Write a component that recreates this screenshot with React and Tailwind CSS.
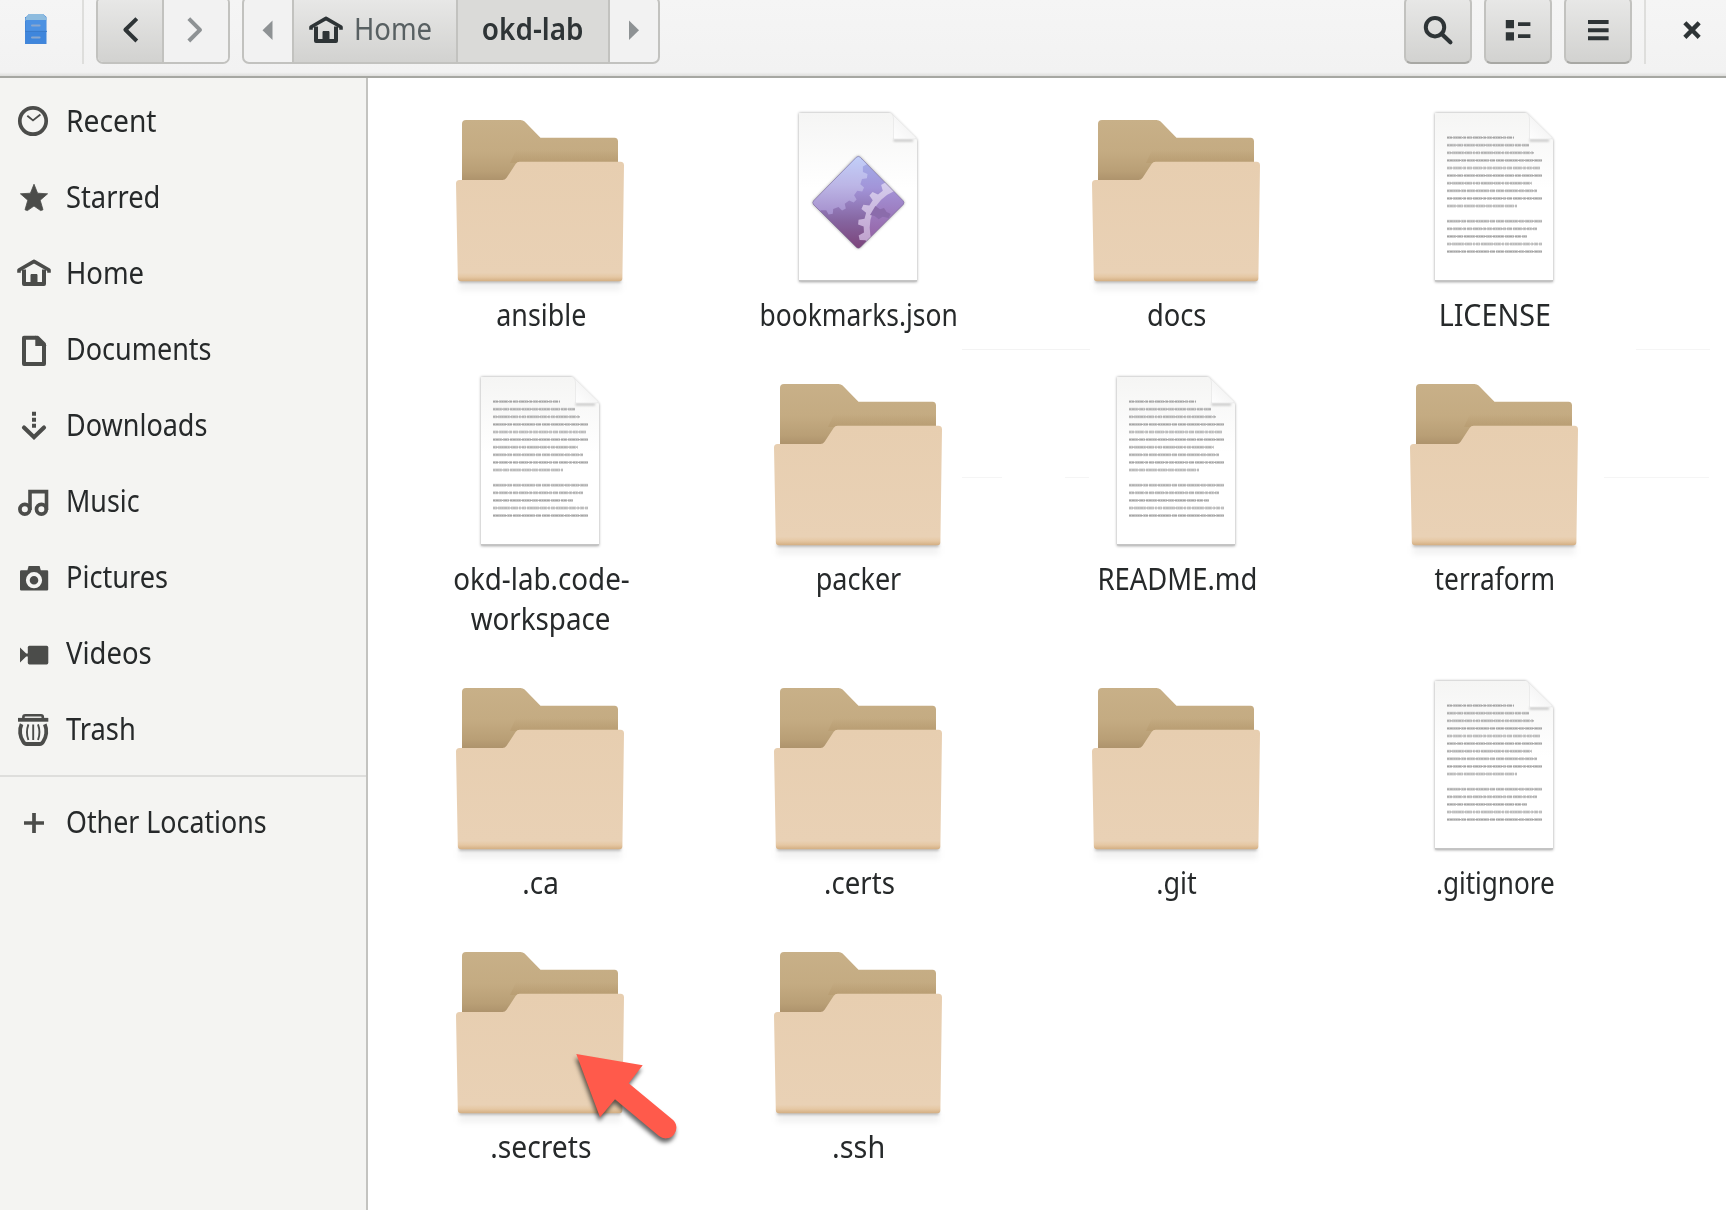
import React from "react";
import clsx from "clsx";

/* ---------- symbolic icons (32px grid) ---------- */
const Sym = ({ children, className }) => (
  <svg viewBox="0 0 32 32" className={clsx("h-8 w-8 shrink-0 overflow-visible", className)} fill="none" stroke="currentColor">
    {children}
  </svg>
);

const Recent = () => (
  <Sym>
    <circle cx="15" cy="16" r="13.2" strokeWidth="3.7" />
    <path d="M9.3 10.8 15 15.4 22.4 9.6" strokeWidth="1.9" />
  </Sym>
);
const Star = () => (
  <Sym>
    <path d="M16 3.2 19.6 12.2 29.6 12.8 22.2 19.2 25 28.8 22.6 29.6 16 25 9.4 29.6 7 28.8 9.8 19.2 2.4 12.8 12.4 12.2Z" fill="currentColor" strokeWidth="0.8" strokeLinejoin="round" />
  </Sym>
);
const HomeIcon = () => (
  <Sym>
    <path d="M1 15.8V13L16 4.4 31 13V15.8" strokeWidth="3.6" strokeLinejoin="round" />
    <path d="M6 12.5V27H26V12.5" strokeWidth="4" strokeLinejoin="round" />
    <path d="M13 27.5V17.5H19V27.5Z" fill="currentColor" strokeWidth="1" />
  </Sym>
);
const Doc = () => (
  <Sym>
    <path d="M6 4.8H19.6L26 11.2V31H6Z" strokeWidth="4" strokeLinejoin="round" />
    <path d="M18 4V12.4H27Z" fill="currentColor" strokeWidth="1.4" />
  </Sym>
);
const Down = () => (
  <Sym>
    <path d="M14 2.8h4v4h-4zM14 8.8h4v4h-4zM14 14.8h4v4h-4z" fill="currentColor" stroke="none" />
    <path d="M6 18.6 16 28.2 26 18.6" strokeWidth="4.2" strokeLinecap="round" />
  </Sym>
);
const Music = () => (
  <Sym>
    <circle cx="6.8" cy="24.2" r="4.9" strokeWidth="3.7" />
    <circle cx="23.4" cy="24.2" r="4.9" strokeWidth="3.7" />
    <path d="M12 25V6.6H28.5V25" strokeWidth="3.6" />
  </Sym>
);
const Camera = () => (
  <Sym>
    <path d="M2 10.4Q2 9.2 3.2 9.2H9.4L10.6 5H21.6L22.8 9.2H29Q30.2 9.2 30.2 10.4V28.4Q30.2 29.4 29 29.4H3.2Q2 29.4 2 28.4Z" fill="currentColor" stroke="none" />
    <circle cx="16" cy="19.2" r="6.2" stroke="#f4f4f2" strokeWidth="3.8" />
  </Sym>
);
const Video = () => (
  <Sym>
    <rect x="9.8" y="8.8" width="20.5" height="18.6" rx="1.6" fill="currentColor" stroke="none" />
    <path d="M2 10.6 8.2 16.4H10V19.6H8.2L2 25.4Z" fill="currentColor" stroke="none" />
  </Sym>
);
const Trash = () => (
  <Sym>
    <path d="M0 6.8H30.3" strokeWidth="3.8" />
    <path d="M5.4 5.6V4Q5.4 2.2 7.2 2.2H23Q24.8 2.2 24.8 4V5.6" strokeWidth="2.6" />
    <path d="M3.6 11.2C0.8 17 2 24 5.2 28.6Q6.4 31 8.6 31H21.8Q24 31 25.2 28.6C28.4 24 29.5 17 26.8 11.2" strokeWidth="3.8" />
    <path d="M10.4 11.4C8.4 17 8.4 22 10.4 27M15.2 11.4V27M20 11.4C22 17 22 22 20 27" strokeWidth="1.9" />
  </Sym>
);
const Plus = () => (
  <Sym>
    <path d="M6 17H26M16 7V27" strokeWidth="3.7" />
  </Sym>
);

/* ---------- file icons (180 x 188 box) ---------- */
const Defs = () => (
  <svg className="absolute h-0 w-0" aria-hidden="true">
    <defs>
      <linearGradient id="back" x1="0" y1="0" x2="0" y2="1">
        <stop offset="0" stopColor="#c8b088" />
        <stop offset="0.5" stopColor="#c4ab82" />
        <stop offset="0.8" stopColor="#b99f76" />
        <stop offset="1" stopColor="#a98e68" />
      </linearGradient>
      <linearGradient id="backRight" x1="0" y1="0" x2="0" y2="1">
        <stop offset="0" stopColor="#b79b70" stopOpacity="0" />
        <stop offset="1" stopColor="#b79b70" />
      </linearGradient>
      <linearGradient id="front" x1="0" y1="0" x2="0" y2="1">
        <stop offset="0" stopColor="#e7ceb0" />
        <stop offset="0.93" stopColor="#e9d1b5" />
        <stop offset="0.965" stopColor="#e5c7a3" />
        <stop offset="1" stopColor="#d3ae82" />
      </linearGradient>
      <linearGradient id="paper" x1="0" y1="0" x2="0" y2="1">
        <stop offset="0" stopColor="#f5f5f4" />
        <stop offset="0.45" stopColor="#ffffff" />
      </linearGradient>
      <linearGradient id="fold" x1="0" y1="1" x2="0.6" y2="0.4">
        <stop offset="0" stopColor="#ffffff" />
        <stop offset="1" stopColor="#f4f4f4" />
      </linearGradient>
      <linearGradient id="gem" x1="0" y1="0" x2="0" y2="1">
        <stop offset="0" stopColor="#a3b2ec" />
        <stop offset="0.35" stopColor="#a294d8" />
        <stop offset="0.7" stopColor="#85649f" />
        <stop offset="1" stopColor="#7b4278" />
      </linearGradient>
      <linearGradient id="gearA" gradientUnits="userSpaceOnUse" x1="0" y1="165" x2="0" y2="345">
        <stop offset="0" stopColor="#c2d0fa" />
        <stop offset="0.5" stopColor="#bcb6e6" />
        <stop offset="1" stopColor="#a58fcc" />
      </linearGradient>
      <linearGradient id="gearB" gradientUnits="userSpaceOnUse" x1="0" y1="250" x2="0" y2="440">
        <stop offset="0" stopColor="#d5cdee" />
        <stop offset="1" stopColor="#bf9fcb" />
      </linearGradient>
      <linearGradient id="inner" gradientUnits="userSpaceOnUse" x1="0" y1="270" x2="0" y2="420">
        <stop offset="0" stopColor="#a392d6" />
        <stop offset="1" stopColor="#9562a4" />
      </linearGradient>
      <clipPath id="gemClip">
        <path d="M349 172Q355 166 361 172L489 302Q495 308 489 314L361 442Q355 448 349 442L221 314Q215 308 221 302Z" />
      </clipPath>
    </defs>
  </svg>
);

const Folder = () => (
  <svg viewBox="0 0 180 188" className="h-full w-full overflow-visible">
    <path d="M9 177H171" stroke="#000" strokeOpacity="0.32" strokeWidth="3" className="blur-[1.5px]" />
    <path d="M9 182H171" stroke="#000" strokeOpacity="0.06" strokeWidth="8" className="blur-[3px]" />
    <path d="M12 80V20Q12 16 16 16H70.5Q73 16 74.6 17.6L90.5 33.7H164.5Q168 33.7 168 37.5V80Z" fill="url(#back)" />
    <path d="M66 46H168V59H60Z" fill="url(#backRight)" opacity="0.7" />
    <path d="M6 79.5Q6 76 9.5 76H52.5Q55 76 56.6 73.8L65.6 60Q67 57.8 69.6 57.8H170.5Q174 57.8 174 61.5L172.4 174Q172.4 177.2 169.4 177.2H11Q8 177.2 7.8 174Z" fill="url(#front)" />
  </svg>
);

const Page = ({ children }) => (
  <svg viewBox="0 0 180 188" className="h-full w-full overflow-visible">
    <path d="M31 9H122L149 36V178H31Z" fill="#000" opacity="0.38" className="blur-[1.4px]" />
    <path d="M31 9H122Q124 9 126 11L147 32Q149 34 149 36.5V177H31Z" fill="url(#paper)" />
    <path d="M31 176.8H149" stroke="#c4c4c4" strokeWidth="1.4" />
    <path d="M125.5 36.4H145" stroke="#000" strokeOpacity="0.22" strokeWidth="2.2" className="blur-[1px]" />
    <path d="M123.5 9.6Q125.5 11 125.5 15V35H146.5Q149 35 148 33.4Z" fill="url(#fold)" stroke="#e2e2e2" strokeWidth="0.6" />
    {children}
  </svg>
);

const LINE_ENDS = [110, 125, 130, 138, 136, 138, 128, 133, 138, 113, null, 138, 133, 123, 138, 138];
const LINE_DASHES = ["5 1 9 1 3 1", "9 1 6 1 11 1", "4 1 12 1 7 1 2 1", "13 1 5 1 8 1"];

const TextPage = () => (
  <Page>
    {LINE_ENDS.map((end, i) =>
      end ? (
        <g key={i}>
          <path d={`M43 ${33.6 + i * 7.6}H${end}`} stroke="#d2d2d2" strokeWidth="3" strokeDasharray={LINE_DASHES[i % 4]} />
          <path d={`M43 ${33.6 + i * 7.6}H${end}`} stroke="#9c9c9c" strokeWidth="1.2" strokeDasharray="2 0.7 3 0.8 1.4 0.6" opacity="0.85" />
        </g>
      ) : null
    )}
  </Page>
);

const gear = (cx, cy, r, teeth, depth, phase = 0) => {
  const step = (Math.PI * 2) / teeth;
  const pt = (rad, a) => `${(cx + rad * Math.cos(a)).toFixed(1)} ${(cy + rad * Math.sin(a)).toFixed(1)}`;
  let d = "";
  for (let i = 0; i < teeth; i++) {
    const a = i * step + phase;
    d += `${i ? "L" : "M"}${pt(r, a)}L${pt(r + depth, a + step * 0.12)}L${pt(r + depth, a + step * 0.42)}L${pt(r, a + step * 0.56)}`;
  }
  return d + "Z";
};

const GemPage = () => (
  <Page>
    <g transform="translate(-28 -4) scale(0.33333)">
      <path d="M349 172Q355 166 361 172L489 302Q495 308 489 314L361 442Q355 448 349 442L221 314Q215 308 221 302Z" fill="#444" opacity="0.6" className="blur-[4px]" />
      <g clipPath="url(#gemClip)">
        <rect x="215" y="165" width="280" height="285" fill="url(#gem)" />
        <path d={gear(248, 210, 121, 20, 14, 0.05)} fill="url(#gearA)" />
        <path d={gear(505, 382, 134, 20, 17, 0.02)} fill="url(#gearB)" />
        <circle cx="507" cy="383" r="118" fill="url(#inner)" />
        <path d="M390 345 406 318 420 328 432 324 440 336 452 342 446 354 428 350 416 358 404 348Z" fill="#8b6cab" />
      </g>
      <path d="M349 172Q355 166 361 172L489 302Q495 308 489 314L361 442Q355 448 349 442L221 314Q215 308 221 302Z" fill="none" stroke="#6d5b8c" strokeOpacity="0.45" strokeWidth="3" />
    </g>
  </Page>
);

const Pointer = () => (
  <svg viewBox="0 0 180 188" className="absolute inset-0 h-full w-full overflow-visible drop-shadow-[-1px_4px_2px_rgba(0,0,0,0.6)]">
    <path d="M126.3 118 192.7 129.3 178.7 147.3 222.5 183.5A9.5 9.5 0 0 1 209 200L165 163.3 150 181.3Z" fill="#ff5a4b" />
  </svg>
);

/* ---------- data ---------- */
const PLACES = [
  [Recent, "Recent", "scale-x-[0.94]"],
  [Star, "Starred", "scale-x-[0.91]"],
  [HomeIcon, "Home", "scale-x-[0.915]"],
  [Doc, "Documents", "scale-x-[0.9]"],
  [Down, "Downloads", "scale-x-[0.9]"],
  [Music, "Music", "scale-x-[0.895]"],
  [Camera, "Pictures", "scale-x-[0.905]"],
  [Video, "Videos", "scale-x-[0.915]"],
  [Trash, "Trash", "scale-x-[0.91]"],
];

const FILES = [
  [Folder, ["ansible"], "scale-x-[0.895]"],
  [GemPage, ["bookmarks.json"], "scale-x-[0.88]"],
  [Folder, ["docs"], "scale-x-[0.91]"],
  [TextPage, ["LICENSE"], "scale-x-[0.955]"],
  [TextPage, ["okd-lab.code-", "workspace"], "scale-x-[0.925]"],
  [Folder, ["packer"], "scale-x-[0.9]"],
  [TextPage, ["README.md"], "scale-x-[0.915]"],
  [Folder, ["terraform"], "scale-x-[0.875]"],
  [Folder, [".ca"], "scale-x-[0.93]"],
  [Folder, [".certs"], "scale-x-[0.92]"],
  [Folder, [".git"], "scale-x-[0.9]"],
  [TextPage, [".gitignore"], "scale-x-[0.87]"],
  [Folder, [".secrets"], "scale-x-[0.94]", true],
  [Folder, [".ssh"], "scale-x-[0.96]"],
];

const RAISED = "bg-linear-to-b from-[#e8e8e7] to-[#d2d2d0]";

const ToolButton = ({ children }) => (
  <button className={clsx("flex h-full w-[68px] items-center justify-center rounded-[7px] border-2 border-[#c2c2bf] border-b-[#a8a8a4]", RAISED)}>
    {children}
  </button>
);

const Place = ({ icon: Icon, label, scale }) => (
  <li className="flex h-19 items-center gap-4 pl-[18px]">
    <span className="text-[#4b4c4a]"><Icon /></span>
    <span className={clsx("origin-left whitespace-nowrap", scale)}>{label}</span>
  </li>
);

export default function App() {
  return (
    <div className="flex h-[1210px] w-[1726px] flex-col overflow-hidden bg-white font-['Noto_Sans',sans-serif] text-[30px] leading-10 text-[#26292a]">
      <Defs />
      <header className="flex h-[78px] shrink-0 items-start border-b-2 border-[#a6a7a2] bg-linear-to-b from-[#f5f5f5] from-0% via-[#f2f2f2] via-95% to-[#dededc] text-[#2e3436]">
        <div className="-mt-1 flex h-[68px] w-full items-stretch">
          <div className="flex w-[82px] items-center pl-6">
            <svg viewBox="0 0 24 32" className="mt-[-2px] h-8 w-6">
              <path d="M2 4 5 1H19L22.5 4V31H1V4Z" fill="#4386d8" />
              <path d="M1.5 5 5 1H19L22.5 5V8H1.5Z" fill="#8ebcdf" />
              <rect x="2" y="7" width="20" height="11" fill="#4c91e2" />
              <rect x="2" y="19" width="20" height="11" fill="#3f86dc" />
              <path d="M1 18.4H23" stroke="#3a7bcb" strokeWidth="1" />
              <path d="M8 12.6H15.6M8 24.6H15.6" stroke="#8aa7cd" strokeWidth="2" strokeLinecap="round" />
            </svg>
          </div>
          <div className="w-0.5 bg-[#dededc]" />
          <div className="ml-3 flex w-[134px] overflow-hidden rounded-[7px] border-2 border-[#c2c2bf]">
            <button className={clsx("-mb-0.5 flex w-[66px] items-center justify-center border-r-2 border-b-2 border-[#c2c2bf] border-b-[#a8a8a4]", RAISED)}>
              <Sym><path d="M22.8 4.6 11.4 15.8 22.8 27" strokeWidth="4" strokeLinejoin="round" /></Sym>
            </button>
            <button className="flex flex-1 items-center justify-center bg-[#f2f2f2] text-[#8e9294]">
              <Sym><path d="M8.8 4.6 20 15.8 8.8 27" strokeWidth="4" strokeLinejoin="round" /></Sym>
            </button>
          </div>
          <nav className="ml-3 flex w-[418px] overflow-hidden rounded-[7px] border-2 border-[#c2c2bf] bg-[#f2f2f2]">
            <button className="flex w-12 items-center justify-center text-[#8e9294]">
              <Sym><path d="M20.5 6.5V26L10.5 16.2Z" fill="currentColor" stroke="none" /></Sym>
            </button>
            <button className={clsx("-mb-0.5 flex w-[166px] items-center gap-3 border-x-2 border-b-2 border-[#c2c2bf] border-b-[#a8a8a4] pl-4", RAISED)}>
              <HomeIcon />
              <span className="-mt-0.5 origin-left scale-x-[0.915] text-[#586062]">Home</span>
            </button>
            <button className="flex w-[150px] items-center justify-center bg-[#dadad8] font-semibold">
              <span className="-mt-0.5 scale-x-[0.93] whitespace-nowrap">okd-lab</span>
            </button>
            <button className="flex flex-1 items-center justify-center border-l-2 border-[#c2c2bf] text-[#8e9294]">
              <Sym><path d="M11 6.5V26L21 16.2Z" fill="currentColor" stroke="none" /></Sym>
            </button>
          </nav>
          <div className="ml-auto flex gap-3">
            <ToolButton>
              <Sym>
                <circle cx="13" cy="13.2" r="9.2" strokeWidth="4" />
                <path d="M19.5 19.8 28.4 28.2" strokeWidth="4.2" strokeLinecap="round" />
              </Sym>
            </ToolButton>
            <ToolButton>
              <Sym>
                <path d="M3.8 6h8.2v8.2H3.8zM3.8 18.2h8.2v8.2H3.8zM16 8.2h12.4v3.8H16zM16 20.2h12.4v3.8H16z" fill="currentColor" stroke="none" />
              </Sym>
            </ToolButton>
            <ToolButton>
              <Sym>
                <path d="M6 6h20.6v4H6zM6 14.2h20.6v4H6zM6 22.2h20.6v4H6z" fill="currentColor" stroke="none" />
              </Sym>
            </ToolButton>
          </div>
          <div className="ml-3 w-0.5 bg-[#dededc]" />
          <button className="flex w-20 items-center justify-center pl-3">
            <Sym><path d="M10.4 10.4 21.6 21.8M21.6 10.4 10.4 21.8" strokeWidth="4.4" strokeLinecap="square" /></Sym>
          </button>
        </div>
      </header>

      <div className="flex min-h-0 flex-1">
        <aside className="w-[368px] shrink-0 border-r-2 border-[#c3c3c0] bg-[#f4f4f2] pt-[5px]">
          <ul>
            {PLACES.map(([icon, label, scale]) => (
              <Place key={label} icon={icon} label={label} scale={scale} />
            ))}
          </ul>
          <hr className="mt-2 mb-[7px] border-t-2 border-[#dededc]" />
          <ul>
            <Place icon={Plus} label="Other Locations" scale="scale-x-[0.893]" />
          </ul>
        </aside>

        <main className="relative flex-1 pt-[26px] pl-[13px]">
          <div className="absolute top-[271px] left-[594px] h-px w-32 bg-[#f3f3f3]" />
          <div className="absolute top-[271px] left-[1268px] h-px w-[74px] bg-[#f5f5f5]" />
          <div className="absolute top-[399px] left-[594px] h-px w-10 bg-[#f5f5f5]" />
          <div className="absolute top-[399px] left-[697px] h-px w-6 bg-[#f5f5f5]" />
          <div className="absolute top-[399px] left-[1236px] h-px w-[105px] bg-[#f5f5f5]" />
          <div className="relative grid w-[1272px] grid-cols-4 items-start gap-y-8">
            {FILES.map(([Icon, lines, scale, marked]) => (
              <div key={lines[0]} className="flex flex-col items-center">
                <div className="relative h-[188px] w-[180px]">
                  <Icon />
                  {marked && <Pointer />}
                </div>
                <div className="mt-[3px] mb-px ml-0.5 flex flex-col items-center">
                  {lines.map((line) => (
                    <span key={line} className={clsx("block whitespace-nowrap", scale)}>{line}</span>
                  ))}
                </div>
              </div>
            ))}
          </div>
        </main>
      </div>
    </div>
  );
}
